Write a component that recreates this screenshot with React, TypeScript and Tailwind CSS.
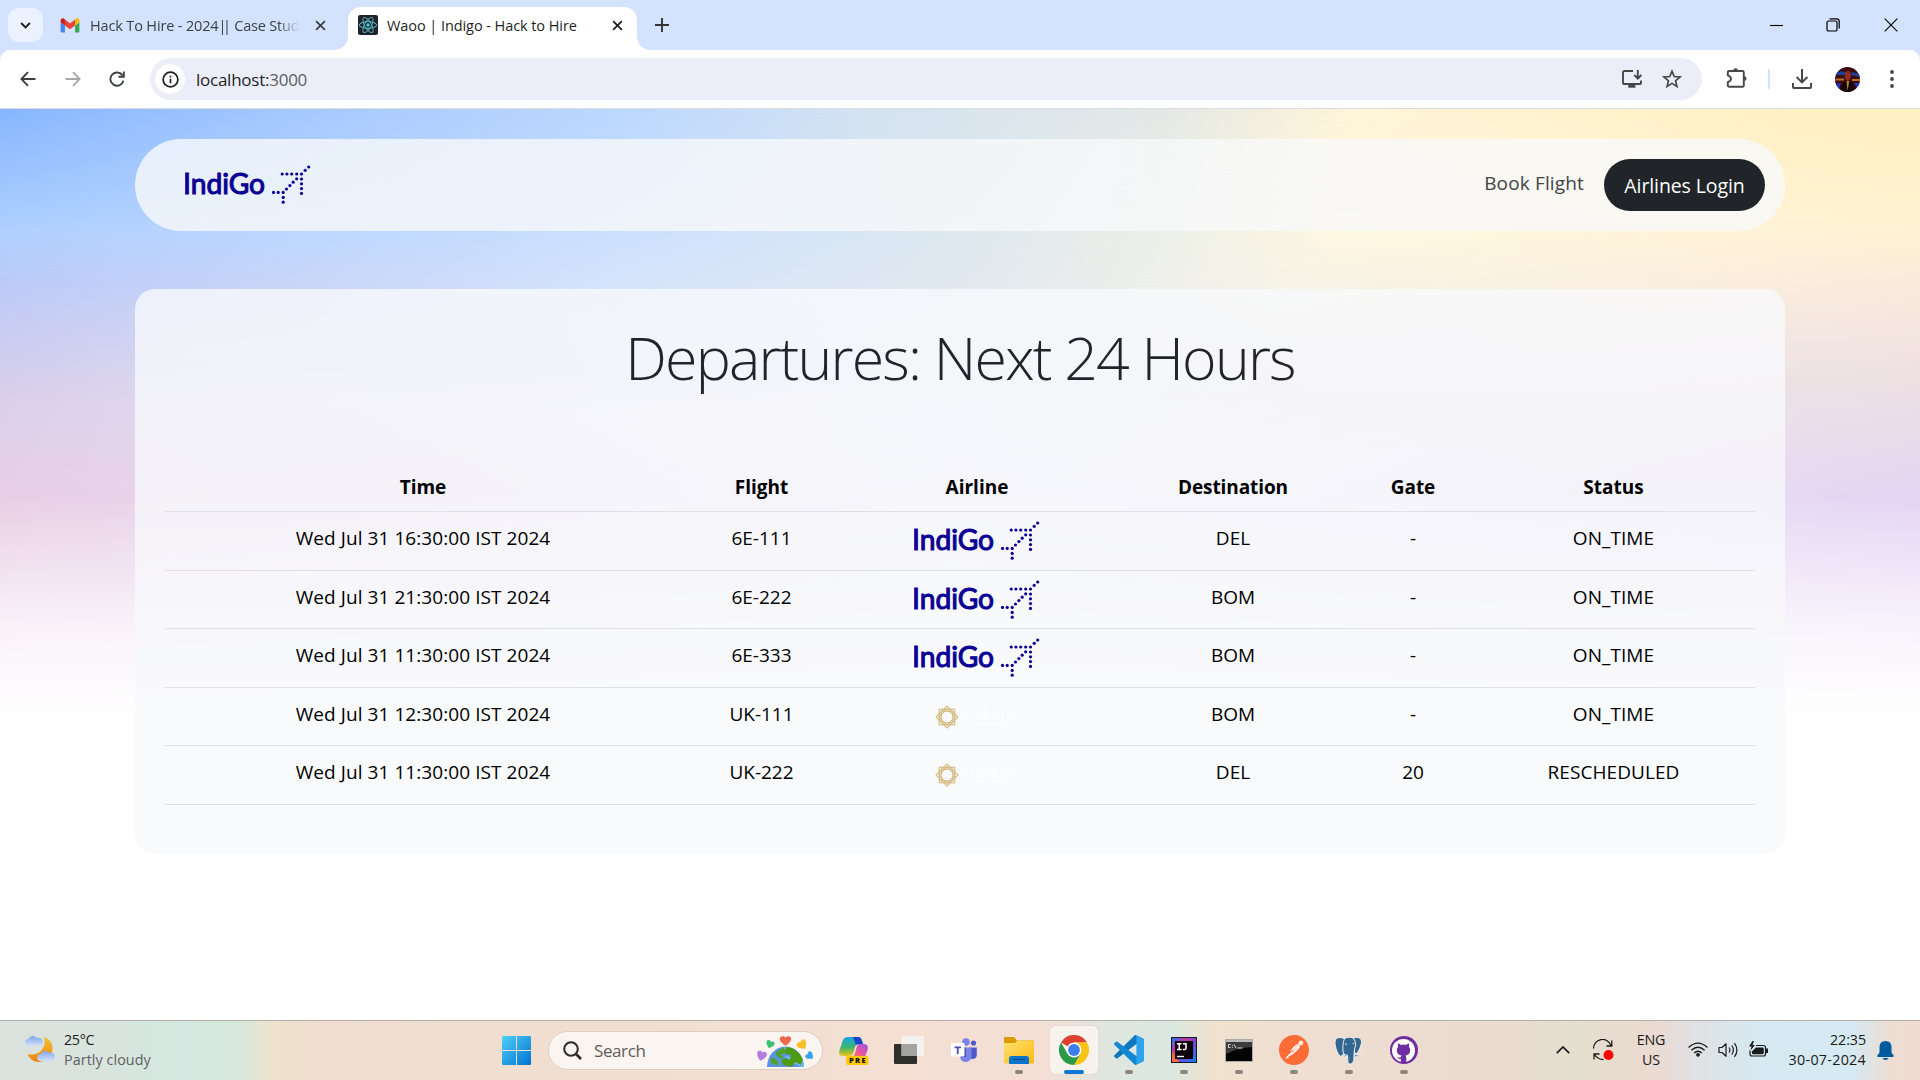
import React from 'react';
import { SiPostman, SiReact } from 'react-icons/si';

const UI = "font-['Open_Sans','Noto_Sans',sans-serif]";

function CloseIcon({ className }: { className: string }) {
  return (
    <svg viewBox="0 0 12 12" className={className} fill="none" stroke="currentColor" strokeWidth="1.9">
      <path d="M1.2 1.2 10.8 10.8M10.8 1.2 1.2 10.8" />
    </svg>
  );
}

function GmailIcon() {
  return (
    <svg viewBox="0 0 20 16" className="h-[15px] w-5 shrink-0">
      <path d="M1.4 15.5H4.6V8L0 4.5V14.1C0 14.9.6 15.5 1.4 15.5Z" fill="#4285f4" />
      <path d="M15.4 15.5H18.6C19.4 15.5 20 14.9 20 14.1V4.5L15.4 8Z" fill="#34a853" />
      <path d="M15.4 1.7V8L20 4.5V2.7C20 .9 18 -.4 16.3 .9Z" fill="#fbbc04" />
      <path d="M4.6 8V1.7L10 5.8 15.4 1.7V8L10 12Z" fill="#ea4335" />
      <path d="M0 2.7V4.5L4.6 8V1.7L3.7.9C2-.4 0 .9 0 2.7Z" fill="#c5221f" />
    </svg>
  );
}

function TabStrip() {
  return (
    <div className="flex h-[50px] shrink-0 items-start bg-[#d3e2fd] text-[#1f1f1f]">
      <div className="ml-2 mt-2 flex h-[34px] w-[35px] items-center justify-center rounded-[11px] bg-[#ebf1fe]">
        <svg viewBox="0 0 12 8" className="h-[7px] w-[11px]" fill="none" stroke="#1f1f1f" strokeWidth="2.2">
          <path d="M1 1.2 6 6.2 11 1.2" />
        </svg>
      </div>
      <div className="ml-[17px] flex h-[50px] w-[272px] items-center">
        <GmailIcon />
        <div className="ml-[10px] w-[209px] overflow-hidden whitespace-nowrap pt-px text-[14.5px] tracking-[-0.15px] text-[#3c4043] [mask-image:linear-gradient(to_right,black_90%,transparent)]">
          Hack To Hire - 2024<span className="tracking-[-3.4px]">||</span>
          <span className="ml-[3px] tracking-[-0.2px]"> Case Study</span>
        </div>
        <CloseIcon className="ml-4 h-[11px] w-[11px] shrink-0 text-[#3c4043]" />
      </div>
      <div className="relative ml-4 mt-[7px] flex h-[43px] w-[289px] items-center rounded-t-[13px] bg-white pb-[7px] pl-[10px]">
        <div className="absolute -left-[13px] bottom-0 h-[13px] w-[13px] bg-[radial-gradient(circle_at_0_0,transparent_12.5px,white_13px)]" />
        <div className="absolute -right-[13px] bottom-0 h-[13px] w-[13px] bg-[radial-gradient(circle_at_100%_0,transparent_12.5px,white_13px)]" />
        <div className="flex h-5 w-5 items-center justify-center rounded-[2px] bg-[#222326]">
          <SiReact className="h-[18px] w-[18px] text-[#58c4dc]" />
        </div>
        <div className="ml-[9px] w-[225px] whitespace-nowrap pt-px text-[14.5px] tracking-[-0.07px]">Waoo | Indigo - Hack to Hire</div>
        <CloseIcon className="h-[11px] w-[11px] shrink-0" />
      </div>
      <svg viewBox="0 0 14 14" className="ml-[18px] mt-[18px] h-[14px] w-[14px]" fill="none" stroke="#333" strokeWidth="1.9">
        <path d="M7 0V14M0 7H14" />
      </svg>
      <div className="ml-auto mr-[22px] mt-[18px] flex items-center">
        <svg viewBox="0 0 13 13" className="h-[13px] w-[13px]" stroke="#000" strokeWidth="1.1">
          <path d="M0 6.5H13" />
        </svg>
        <svg viewBox="0 0 14 14" className="ml-[43px] h-[14px] w-[14px]" fill="none" stroke="#000" strokeWidth="1.2">
          <rect x="1" y="3" width="10" height="10" rx="1.6" />
          <path d="M3.6 .8H10.6Q13.2.8 13.2 3.4V10.4" />
        </svg>
        <svg viewBox="0 0 14 14" className="ml-[44px] h-[14px] w-[14px]" fill="none" stroke="#000" strokeWidth="1.1">
          <path d="M.7.7 13.3 13.3M13.3.7.7 13.3" />
        </svg>
      </div>
    </div>
  );
}

function Toolbar() {
  return (
    <div className="h-[59px] shrink-0 bg-[#d3e2fd]">
      <div className="flex h-[59px] items-center rounded-t-[10px] border-b border-[#dadde3] bg-white pl-5 text-[#474747]">
        <svg viewBox="0 0 16 16" className="h-4 w-4" fill="none" stroke="#3c4043" strokeWidth="1.9">
          <path d="M15.5 8H1.5M8 1.2 1.4 8 8 14.8" />
        </svg>
        <svg viewBox="0 0 16 16" className="ml-[29px] h-4 w-4" fill="none" stroke="#a6a8ab" strokeWidth="1.9">
          <path d="M.5 8H14.5M8 1.2 14.6 8 8 14.8" />
        </svg>
        <svg viewBox="0 0 16 16" className="ml-[28px] h-4 w-4" fill="none" stroke="#3c4043" strokeWidth="1.9">
          <path d="M13.6 4.6A6.6 6.6 0 1 0 14.4 9.6" />
          <path d="M14.8.4V5.8H9.4" />
        </svg>
        <div className="ml-[25px] flex h-[42px] w-[1552px] items-center rounded-full bg-[#ebeef8] pl-[5px]">
          <div className="flex h-[30px] w-[30px] items-center justify-center rounded-full bg-white">
            <svg viewBox="0 0 18 18" className="h-[17px] w-[17px]" fill="none" stroke="#1f1f1f" strokeWidth="1.8">
              <circle cx="9" cy="9" r="7.8" />
              <path d="M9 8.2V13M9 5V6.8" />
            </svg>
          </div>
          <div className="ml-[11px] pt-px text-[17px] tracking-[-0.25px] text-[#1f1f1f]">
            localhost:<span className="text-[#5b5e63]">3000</span>
          </div>
          <svg viewBox="0 0 20 18" className="ml-auto h-[18px] w-5" fill="none" stroke="#474747" strokeWidth="1.9">
            <path d="M11 1H2.6Q1 1 1 2.6V12.4Q1 14 2.6 14H17.4Q19 14 19 12.4V10.4" />
            <path d="M15.8 0V8M12.3 5 15.8 8.6 19.3 5" />
            <path d="M6.3 16.2H13.4" strokeWidth="3" />
          </svg>
          <svg viewBox="0 0 20 20" className="ml-5 mr-5 h-[20px] w-[20px]" fill="none" stroke="#474747" strokeWidth="1.7">
            <path d="M10 2.2 12.2 7.5 18 8 13.6 11.7 14.9 17.4 10 14.4 5.1 17.4 6.4 11.7 2 8 7.8 7.5Z" />
          </svg>
        </div>
        <svg viewBox="0 0 22 22" className="-mt-[3px] ml-[24px] h-[22px] w-[22px]" fill="none" stroke="#474747" strokeWidth="1.9">
          <path d="M2.8 4H16.4Q17.8 4 17.8 5.4V18.4Q17.8 19.8 16.4 19.8H3.2Q1.8 19.8 1.8 18.4V15.2Q5 14 5 11.8 5 9.6 1.8 8.4V5Q1.8 4 2.8 4Z" />
          <path d="M7.2 3.6A2.4 2.4 0 0 1 12 3.6ZM18.2 9.2A2.4 2.4 0 0 1 18.2 14Z" fill="#474747" stroke="none" />
        </svg>
        <div className="ml-[20px] h-5 w-[2px] bg-[#d3e2fd]" />
        <svg viewBox="0 0 22 22" className="ml-[21px] h-[22px] w-[22px]" fill="none" stroke="#474747" strokeWidth="2">
          <path d="M11 1V14M5.6 9 11 14.4 16.4 9" />
          <path d="M2 15V18.4Q2 20 3.6 20H18.4Q20 20 20 18.4V15" />
        </svg>
        <svg viewBox="0 0 25 25" className="ml-[22px] h-[25px] w-[25px] rounded-full">
          <rect width="25" height="25" fill="#3a0a10" />
          <path d="M0 6Q6 3 10 5V8H0ZM17 5 25 7V10L16 8Z" fill="#1d3f9c" />
          <path d="M1 11.500H9V13.500H0ZM17 12H25V14H17Z" fill="#b8722b" />
          <path d="M0 17 6 16 4 22ZM19 16 25 16 22 21Z" fill="#2038c8" />
          <path d="M9.5 8Q10 4 13 4 16 4 16 8 16 13 12.5 14 9.5 12 9.5 8Z" fill="#8f2d1c" />
          <path d="M5 25Q5 15 12.5 14 20 15 20 25Z" fill="#180507" />
          <path d="M11.500 14 12.5 24 14.2 14Z" fill="#b98c2c" />
        </svg>
        <svg viewBox="0 0 4 20" className="ml-[30px] h-5 w-1" fill="#474747">
          <circle cx="2" cy="3" r="1.9" />
          <circle cx="2" cy="10" r="1.9" />
          <circle cx="2" cy="17" r="1.9" />
        </svg>
      </div>
    </div>
  );
}

const PLANE_DOTS: [number, number][] = [
  [124.5, 2], [121, 5.3], [117.3, 9], [112.5, 9], [107.5, 9], [102.7, 9], [98, 9],
  [117.3, 14], [117.3, 18.8], [117.3, 23.6], [117.3, 28.4], [112.5, 13.8], [109, 17.2],
  [105.7, 20.6], [102.3, 24], [99, 27.4], [94, 27.4], [89.3, 27.4], [99, 32.4], [99, 37.2],
];

function IndigoLogo() {
  return (
    <svg viewBox="0 0 127 40" className="h-10 w-[127px]" fill="#0a0094">
      <text
        x="-2"
        y="28.8"
        textLength="82"
        lengthAdjust="spacingAndGlyphs"
        stroke="#0a0094"
        strokeWidth="1.1"
        className="font-[Lato,sans-serif] text-[29px] font-normal"
      >
        IndiGo
      </text>
      {PLANE_DOTS.map(([x, y]) => (
        <circle key={`${x}-${y}`} cx={x - 0.8} cy={y} r="1.6" />
      ))}
    </svg>
  );
}

function VistaraLogo() {
  return (
    <div className="flex h-10 w-[127px] items-center pl-[21px]">
      <svg viewBox="-12 -12 24 24" className="h-6 w-6" fill="none" stroke="#d0b575" strokeWidth="1">
        <rect x="-7.8" y="-7.8" width="15.6" height="15.6" />
        <rect x="-7.8" y="-7.8" width="15.6" height="15.6" transform="rotate(45)" />
        <rect x="-5.8" y="-5.8" width="11.6" height="11.6" />
        <rect x="-5.8" y="-5.8" width="11.6" height="11.6" transform="rotate(45)" />
      </svg>
      <div className="ml-[3px] flex flex-col text-white">
        <span className="text-[15px] leading-[12px] tracking-[1.300px]">vistara</span>
        <span className="text-[5px] leading-[8px]">Fly the new feeling</span>
      </div>
    </div>
  );
}

function Backdrop() {
  return (
    <div className="absolute inset-x-0 top-0 h-[620px]">
      <div className="absolute inset-0 bg-[linear-gradient(to_right,#e9cfe6_0,#e9d5ec_200px,#eeeaf8_50%,#e7daf4_1750px,#e5d5f4_100%)] [mask-image:linear-gradient(to_bottom,black_390px,rgba(0,0,0,.72)_440px,rgba(0,0,0,.22)_530px,transparent_615px)]" />
      <div className="absolute inset-0 bg-[linear-gradient(to_right,#dacfea_0,#e2dcf0_250px,#ebeaf6_50%,#ecdee4_100%)] [mask-image:linear-gradient(to_bottom,black_290px,transparent_390px)]" />
      <div className="absolute inset-0 bg-[linear-gradient(to_right,#bdcaf7_0,#cad6f8_300px,#d5e4fc_600px,#e2e9f0_960px,#f7f4e8_1280px,#fbf1e3_1500px,#f8eadb_100%)] [mask-image:linear-gradient(to_bottom,black_178px,transparent_290px)]" />
      <div className="absolute inset-0 bg-[linear-gradient(to_right,#aed0ff_0,#bfd9ff_400px,#cfe2fd_700px,#dce8ee_960px,#edf0e6_1180px,#fff7e0_1340px,#fff3d2_100%)] [mask-image:linear-gradient(to_bottom,black_115px,transparent_180px)]" />
      <div className="absolute inset-0 bg-[linear-gradient(to_right,#86b5ff_0,#a5c8ff_300px,#bdd8fd_640px,#d3e2f1_860px,#e3e8e6_1160px,#fff4d8_1350px,#fff0c2_1800px,#fff0c2_100%)] [mask-image:linear-gradient(to_bottom,black_0,transparent_120px)]" />
    </div>
  );
}

function NavBar() {
  return (
    <div className="mx-[135px] mt-[30px] flex h-[92px] shrink-0 items-center rounded-[46px] bg-[#f8f9fa]/80 pl-[50px] pr-5">
      <IndigoLogo />
      <div className="-mt-[4px] ml-auto mr-5 text-[19px] tracking-[0.15px] text-[#404347]">Book Flight</div>
      <div className="flex h-[52px] w-[161px] items-center justify-center whitespace-nowrap rounded-full bg-[#212529] pt-[2px] text-[19.5px] tracking-[-0.1px] text-white">
        Airlines Login
      </div>
    </div>
  );
}

const FLIGHTS = [
  { time: 'Wed Jul 31 16:30:00 IST 2024', flight: '6E-111', airline: 'indigo', dest: 'DEL', gate: '-', status: 'ON_TIME' },
  { time: 'Wed Jul 31 21:30:00 IST 2024', flight: '6E-222', airline: 'indigo', dest: 'BOM', gate: '-', status: 'ON_TIME' },
  { time: 'Wed Jul 31 11:30:00 IST 2024', flight: '6E-333', airline: 'indigo', dest: 'BOM', gate: '-', status: 'ON_TIME' },
  { time: 'Wed Jul 31 12:30:00 IST 2024', flight: 'UK-111', airline: 'vistara', dest: 'BOM', gate: '-', status: 'ON_TIME' },
  { time: 'Wed Jul 31 11:30:00 IST 2024', flight: 'UK-222', airline: 'vistara', dest: 'DEL', gate: '20', status: 'RESCHEDULED' },
];

const ROW = 'grid grid-cols-[516px_161px_270px_242px_118px_283px] border-b border-[#dee2e6] text-center text-[19px] text-black';

function Departures() {
  return (
    <div className="mx-[135px] mt-[58px] h-[565px] shrink-0 rounded-[20px] bg-[#f8f9fb]/80 px-[30px]">
      <h1 className="mt-[28px] text-center text-[59px] font-light leading-[80px] tracking-[-1.8px] text-[#212529]">
        Departures: Next 24 Hours
      </h1>
      <div className={`${ROW} mt-[65px] h-[50px] pt-[11px] font-bold leading-[28px]`}>
        <div>Time</div>
        <div>Flight</div>
        <div>Airline</div>
        <div className="tracking-[-0.1px]">Destination</div>
        <div>Gate</div>
        <div>Status</div>
      </div>
      {FLIGHTS.map((f, i) => (
        <div key={i} className={`${ROW} h-[58.5px] leading-[52px]`}>
          <div className="tracking-[0.07px]">{f.time}</div>
          <div>{f.flight}</div>
          <div className="flex justify-center pt-[9px]">{f.airline === 'indigo' ? <IndigoLogo /> : <VistaraLogo />}</div>
          <div>{f.dest}</div>
          <div>{f.gate}</div>
          <div className="tracking-[0.07px]">{f.status}</div>
        </div>
      ))}
    </div>
  );
}

function WeatherIcon() {
  return (
    <svg viewBox="0 0 30 30" className="h-[30px] w-[30px]">
      <defs>
        <linearGradient id="moon" x1="0" y1="0" x2="0" y2="1">
          <stop offset="0" stopColor="#f2c335" />
          <stop offset="1" stopColor="#f1820f" />
        </linearGradient>
        <linearGradient id="cloud" x1="0" y1="0" x2="0" y2="1">
          <stop offset="0" stopColor="#7ea6ee" />
          <stop offset="1" stopColor="#d5e1fb" />
        </linearGradient>
      </defs>
      <path d="M19 3C26 5 30 13 26 20 21 30 7 31 2.500 20 14 23 22 14 19 3Z" fill="url(#moon)" />
      <path d="M3.500 12A3.500 3.500 0 0 1 3.500 5 5 5 0 0 1 12 4 4 4 0 0 1 15 12Z" fill="url(#cloud)" />
      <path d="M15.500 27A3.500 3.500 0 0 1 16 20 5 5 0 0 1 24.500 19 4 4 0 0 1 27 27Z" fill="url(#cloud)" />
    </svg>
  );
}

function SearchArt() {
  const heart = 'M0 4.500C-6-1-4-5-1.500-4.500-.5-4.300 0-3.500 0-3 0-3.500.5-4.300 1.500-4.500 4-5 6-1 0 4.500Z';
  return (
    <svg viewBox="0 0 58 33" className="h-[33px] w-[58px]">
      <defs>
        <clipPath id="globe"><path d="M10 32A18 20 0 0 1 47 32Z" /></clipPath>
      </defs>
      <g clipPath="url(#globe)">
        <rect width="58" height="33" fill="#5d93e6" />
        <path d="M26 12 40 14 48 24 47 33H44L40 29 32 28 27 24 29 21 36 22 32 17 25 17Z" fill="#6fb8f5" />
        <path d="M29 12Q40 12 46 24L44 30 38 27 35 32 26 30 24 25 29 23 33 25 34 20 28 19Z" fill="#4c9a12" />
        <path d="M19 17 27 12 29 17 24 20 27 22 23 24 19 20ZM14 22 20 25 22 31 14 28Z" fill="#52a12b" />
      </g>
      <path d={heart} fill="#f0664a" transform="translate(28.500 6) scale(1.450 1.050)" />
      <path d={heart} fill="#3fc06d" transform="translate(13 9.500) rotate(20) scale(1.050 .85)" />
      <path d={heart} fill="#f9c02c" transform="translate(45.500 10) rotate(-35) scale(1.300 1)" />
      <path d={heart} fill="#b57de0" transform="translate(4.500 21) rotate(15) scale(1.250 1.100)" />
      <path d={heart} fill="#3ba2ee" transform="translate(53 21) rotate(-50) scale(1 .85)" />
    </svg>
  );
}

function StartIcon() {
  return (
    <svg viewBox="0 0 29 29" className="h-[29px] w-[29px]">
      <defs>
        <linearGradient id="win" x1="0" y1="0" x2="1" y2="1">
          <stop offset="0" stopColor="#4fd0fb" />
          <stop offset="1" stopColor="#0072d0" />
        </linearGradient>
      </defs>
      <path d="M1 0H14V14H0V1Q0 0 1 0ZM15 0H28Q29 0 29 1V14H15ZM0 15H14V29H1Q0 29 0 28ZM15 15H29V28Q29 29 28 29H15Z" fill="url(#win)" />
    </svg>
  );
}

function CopilotIcon() {
  return (
    <svg viewBox="0 0 30 29" className="h-[29px] w-[30px]">
      <defs>
        <linearGradient id="cpA" x1="0" y1="0" x2="0" y2="1">
          <stop offset="0" stopColor="#17a3e8" />
          <stop offset=".55" stopColor="#3fb56a" />
          <stop offset="1" stopColor="#f0c419" />
        </linearGradient>
        <linearGradient id="cpB" x1="1" y1="0" x2="0" y2="1">
          <stop offset="0" stopColor="#8d58e8" />
          <stop offset=".5" stopColor="#e553a6" />
          <stop offset="1" stopColor="#f9853f" />
        </linearGradient>
      </defs>
      <path d="M9 1H19Q22 1 23 5L24 8H20Q17 8 16 11L14 18Q13 20 10 20H4Q-1 20 .5 14L4 4Q5.500 1 9 1Z" fill="url(#cpA)" />
      <path d="M14 1H19Q22 1 23 5L24 8H20Q18 8 17 9Z" fill="#1446c4" />
      <path d="M20 8H25Q30 8 28.500 14L26 21H12Q15 21 16 17L18 10Q18.500 8 20 8Z" fill="url(#cpB)" />
      <rect x="7" y="20" width="22.500" height="9" rx="2" fill="#fdc70c" />
      <text x="10" y="27.300" textLength="16.500" className="font-['Open_Sans',sans-serif] text-[7.500px] font-extrabold" fill="#111">PRE</text>
    </svg>
  );
}

function TaskViewIcon() {
  return (
    <svg viewBox="0 0 30 28" className="h-7 w-[30px]">
      <rect x="0" y="8" width="23" height="20" rx="1" fill="#2e2e2c" />
      <rect x="7.500" y="0" width="22.500" height="20" rx="1" fill="#f4f4f4" fillOpacity=".85" />
      <path d="M7.500 8H23V20H7.500Z" fill="#a3a3a1" />
    </svg>
  );
}

function TeamsIcon() {
  return (
    <svg viewBox="0 0 26 25" className="h-[25px] w-[26px]">
      <circle cx="15" cy="4" r="3.800" fill="#7b83eb" />
      <circle cx="22.500" cy="5" r="2.600" fill="#5059c9" />
      <path d="M18 9.500H25.800V17Q25.500 21 21.500 21 18 21 18 17Z" fill="#5059c9" />
      <path d="M9 9.500H20.500V17Q20.500 24 14.500 24 9 24 9 17Z" fill="#7b83eb" />
      <path d="M10 9.500H15V19H10Z" fill="#4a53b5" />
      <rect x="0" y="5" width="13.500" height="13.500" rx="1" fill="#fff" />
      <path d="M3.500 8.500H10V10.300H7.700V16H5.800V10.300H3.500Z" fill="#4b53bc" />
    </svg>
  );
}

function FolderIcon() {
  return (
    <svg viewBox="0 0 30 27" className="h-[27px] w-[30px]">
      <defs>
        <linearGradient id="fold" x1="0" y1="0" x2="1" y2="1">
          <stop offset="0" stopColor="#ffe173" />
          <stop offset="1" stopColor="#fcb910" />
        </linearGradient>
      </defs>
      <path d="M0 1Q0 0 1 0H9.500Q10.500 0 11 1L13 3.500H29Q30 3.500 30 4.500V10H0Z" fill="#d99a05" />
      <path d="M0 6H11L13 3.500H29Q30 3.500 30 4.500V25.500Q30 26.500 29 26.500H1Q0 26.500 0 25.500Z" fill="url(#fold)" />
      <path d="M5 27V21.500Q5 19 7.500 19H22.500Q25 19 25 21.500V27Z" fill="#0c74cc" />
      <path d="M9 22.500H21" stroke="#0a4a80" strokeWidth="1" />
    </svg>
  );
}

function ChromeIcon() {
  return (
    <svg viewBox="-15 -15 30 30" className="h-[30px] w-[30px]">
      <path d="M0 0-13-7.500A15 15 0 0 1 13-7.500L0-7.500Z" fill="#dd4132" />
      <path d="M0 0V-7.500H13A15 15 0 0 1 0 15L6.500 3.750Z" fill="#fbc314" />
      <path d="M0 0 6.500 3.750 0 15A15 15 0 0 1-13-7.500L-6.500 3.750Z" fill="#2a9a49" />
      <circle r="7.400" fill="#fff" />
      <circle r="5.900" fill="#3b7ded" />
    </svg>
  );
}

function VsCodeIcon() {
  return (
    <svg viewBox="0 0 30 30" className="h-[30px] w-[30px]">
      <path d="M21.500 0 29 3.400Q30 4 30 5V9L22.400 9 3.500 23.200Q2.700 23.800 2 23.200L.4 21.700Q-.3 21 .4 20.200L20 1Q20.700.1 21.500 0Z" fill="#0f77bd" />
      <path d="M21.500 30 29 26.600Q30 26 30 25V21L22.400 21 3.500 6.800Q2.700 6.200 2 6.800L.4 8.300Q-.3 9 .4 9.800L20 29Q20.700 29.900 21.500 30Z" fill="#1388d2" />
      <path d="M21.500 30Q22.400 29.500 22.400 28V2Q22.400.5 21.500 0L29 3.400Q30 4 30 5V25Q30 26 29 26.600Z" fill="#2ea4ee" />
    </svg>
  );
}

function IntellijIcon() {
  return (
    <svg viewBox="0 0 26 26" className="h-[26px] w-[26px]">
      <defs>
        <linearGradient id="ij" x1="0" y1="0" x2="1" y2="1">
          <stop offset="0" stopColor="#1a7af8" />
          <stop offset=".3" stopColor="#c5339b" />
          <stop offset=".55" stopColor="#7a46c8" />
          <stop offset="1" stopColor="#0b83f8" />
        </linearGradient>
      </defs>
      <rect width="26" height="26" fill="#15152a" />
      <rect x="1" y="1" width="24" height="24" fill="url(#ij)" />
      <path d="M1 14 8 25H1Z" fill="#f76a3c" />
      <rect x="4" y="4" width="18" height="18" fill="#0a0007" />
      <path d="M6 6.700H10.500M8.200 6.700V12.500M6 12.600H10.500M12 6.700H15V11Q15 12.600 13.400 12.600H11.800" stroke="#fff" strokeWidth="1.500" fill="none" />
      <path d="M6 19.500H13" stroke="#fff" strokeWidth="1.400" />
    </svg>
  );
}

function TerminalIcon() {
  return (
    <svg viewBox="0 0 28 23" className="h-[23px] w-7">
      <rect x=".5" y=".5" width="27" height="22" fill="#050505" stroke="#a9a9a9" />
      <path d="M1 1H27V3H1Z" fill="#b8bcc0" />
      <path d="M1 3H27V8Q12 9 1 15Z" fill="#3c3c3c" />
      <path d="M3.500 5.500H5.500M3.500 8.500H5.500M3.500 5.500V8.500M7.500 6V6.800M7.500 8V8.800M9 5.500 11 9M12.500 9H17.500" stroke="#e8e8e8" strokeWidth=".9" />
    </svg>
  );
}

function PostmanIcon() {
  return (
    <div className="rounded-full bg-[radial-gradient(circle,white_60%,transparent_61%)]">
      <SiPostman className="h-[30px] w-[30px] text-[#ff6c37]" />
    </div>
  );
}

function PostgresIcon() {
  return (
    <svg viewBox="0 0 29 29" className="h-[29px] w-[29px]" fill="#336791" stroke="#f3efee" strokeWidth="1" strokeLinejoin="round">
      <path d="M10 2.500C5 .3 1 1.800 1 6.500 1 11 3.500 18 6 20 8 21 9.500 17.500 10.500 16.500L12 4Z" />
      <path d="M19 2.500C24-.3 28 2.500 27.500 6.500 27 11 24.500 15.500 22.500 18L18.500 14 17 4Z" />
      <path d="M9.500 5.500Q10.500 1 15 1.200 19.500.8 21 5 22.500 9.500 20.500 13 20 17.500 20 20.500 20.200 27.500 16.500 28 13.500 28.200 13.800 24 14 21 13.200 19 9.200 19.500 9 15 8.500 9.500 9.500 5.500Z" />
      <path d="M20.500 18.500Q23.500 19.800 26.500 18.500 24.500 21.300 20.300 21ZM13.300 19.500Q11 21.500 7.500 20.700 10.500 20 11.500 18.800" />
      <path d="M11 8.200Q12 7.600 13 8.300M18.500 7.800Q19.300 7.300 20.200 7.800" fill="none" />
    </svg>
  );
}

function GithubIcon() {
  return (
    <div className="flex h-7 w-7 items-center justify-center rounded-full bg-[#6f2da0]">
      <div className="h-[23px] w-[23px] overflow-hidden rounded-full bg-white">
        <svg viewBox="0 0 23 23" className="h-[23px] w-[23px]">
          <path d="M8.800 23V19.800Q5.500 20.300 4.300 17.800 6.300 19.300 8.800 18.200 9 17 9.600 16.500C6.300 16 4.800 14.200 4.800 11.200 4.800 9.800 5.200 8.700 6 7.900Q5.500 6.300 6.200 4.600 7.800 4.700 9.200 5.900 11.500 5.300 13.800 5.900 15.200 4.700 16.800 4.600 17.500 6.300 17 7.900C17.800 8.700 18.200 9.800 18.200 11.200 18.200 14.200 16.700 16 13.400 16.500Q14.300 17.300 14.300 19V23Z" fill="#6f2da0" />
        </svg>
      </div>
    </div>
  );
}

const PINNED: { icon: React.ReactNode; state: 'none' | 'open' | 'active' }[] = [
  { icon: <CopilotIcon />, state: 'none' },
  { icon: <TaskViewIcon />, state: 'none' },
  { icon: <TeamsIcon />, state: 'none' },
  { icon: <FolderIcon />, state: 'open' },
  { icon: <ChromeIcon />, state: 'active' },
  { icon: <VsCodeIcon />, state: 'open' },
  { icon: <IntellijIcon />, state: 'open' },
  { icon: <TerminalIcon />, state: 'open' },
  { icon: <PostmanIcon />, state: 'open' },
  { icon: <PostgresIcon />, state: 'open' },
  { icon: <GithubIcon />, state: 'open' },
];

function Taskbar() {
  return (
    <div className="flex h-[60px] shrink-0 items-center border-t border-[#b5b0ab] bg-[linear-gradient(to_right,#dce2dd_0,#d9e4de_100px,#d3e8e0_180px,#d9e8dc_240px,#eee2cb_275px,#f0ddcf_310px,#f0dfd1_650px,#f5dfd3_900px,#f3dfd5_1050px,#dee6df_1110px,#dae8e1_1170px,#f0e2cd_1215px,#eedfd2_1300px,#ebdad0_1500px,#e4dfcf_1570px,#ebdad0_1650px,#dfe2e5_1700px,#d6e9f2_1760px,#d5eaf4_1850px,#ecddd3_1890px,#f0dccf_1920px)]">
      <div className="ml-[25px] flex w-[477px] items-center">
        <div className="-mt-1"><WeatherIcon /></div>
        <div className="-mt-[2px] ml-[9px] text-[14.300px] leading-5">
          <div className="tracking-[-0.3px] text-[#1b1b1b]">25°C</div>
          <div className="tracking-[0.08px] text-[#5c605e]">Partly cloudy</div>
        </div>
      </div>
      <StartIcon />
      <div className="ml-[17px] flex h-[39px] w-[275px] items-center rounded-full border border-[#dccdc2] bg-[#fbf5f1] pl-[14px]">
        <svg viewBox="0 0 19 19" className="h-[19px] w-[19px]" fill="none" stroke="#2b2b2b" strokeWidth="2">
          <circle cx="8" cy="8" r="6.800" />
          <path d="M13 13 18 18" strokeWidth="2.600" />
        </svg>
        <div className="ml-[12px] text-[17px] tracking-[-0.4px] text-[#5f5c5a]">Search</div>
        <div className="ml-auto mr-[7px] mt-[2px]"><SearchArt /></div>
      </div>
      <div className="-mt-px ml-[3px] flex">
        {PINNED.map((p, i) => (
          <div
            key={i}
            className={`relative mx-[3.500px] flex h-12 w-12 items-center justify-center rounded-[5px] ${
              p.state === 'active' ? 'bg-[#f9f3ee] shadow-[0_0_1px_rgba(0,0,0,.25)]' : ''
            }`}
          >
            {p.icon}
            {p.state === 'open' && <div className="absolute bottom-0 h-1 w-2 rounded-full bg-[#8b857f]" />}
            {p.state === 'active' && <div className="absolute bottom-0 h-1 w-5 rounded-full bg-[#0b78d4]" />}
          </div>
        ))}
      </div>
      <div className="-mt-[2px] ml-auto mr-[26px] flex items-center text-[#1b1b1b]">
        <svg viewBox="0 0 14 8" className="h-2 w-[14px]" fill="none" stroke="#1b1b1b" strokeWidth="1.700">
          <path d="M.8 7.200 7 1 13.200 7.200" />
        </svg>
        <svg viewBox="0 0 22 22" className="ml-[22px] h-[22px] w-[22px]" fill="none" stroke="#1b1b1b" strokeWidth="1.300">
          <path d="M1.500 9.500A9 9 0 0 1 19 6.500M19.800 1.500V7H14.500" />
          <path d="M2 20.500V15H7.500M2.500 15.500Q5.500 20.500 11.500 20.500" />
          <circle cx="16.500" cy="16" r="5" fill="#f00" stroke="none" />
        </svg>
        <div className="ml-[22px] w-[30px] text-center text-[14.300px] leading-5 tracking-[-0.2px]">
          <div>ENG</div>
          <div>US</div>
        </div>
        <svg viewBox="0 0 20 15" className="ml-[22px] h-[15px] w-5" fill="none" stroke="#1b1b1b" strokeWidth="1.300">
          <path d="M.6 5.500Q10-3.300 19.400 5.500M3.400 8.300Q10 2.200 16.600 8.300M6.200 11Q10 7.500 13.800 11" />
          <circle cx="10" cy="12.800" r="1.900" fill="#1b1b1b" stroke="none" />
        </svg>
        <svg viewBox="0 0 20 16" className="ml-[10px] h-4 w-5" fill="none" stroke="#1b1b1b" strokeWidth="1.200">
          <path d="M1 5.500H4L8 1.800V14.200L4 10.500H1Z" strokeLinejoin="round" />
          <path d="M11 5.500Q12.800 8 11 10.500M13.800 3.500Q17 8 13.800 12.500M16.400 1.200Q21.500 8 16.400 14.800" />
        </svg>
        <svg viewBox="0 0 20 17" className="ml-[10px] h-[17px] w-5" fill="none" stroke="#1b1b1b" strokeWidth="1.200">
          <path d="M8 4.500H15.500Q17.500 4.500 17.500 6.500V13Q17.500 15 15.500 15H4Q2 15 2 13V9.500" />
          <path d="M8 6.500H14.500Q15.800 6.500 15.800 7.800V11.800Q15.800 13.200 14.500 13.200H5Q3.800 13.200 3.800 11.800V10.500Z" fill="#1b1b1b" stroke="none" />
          <path d="M18 8H19.500V11.500H18Z" fill="#1b1b1b" />
          <path d="M4.500 0 1 5.500H3.500L2.500 9.500 7 4H4.500L6 0Z" fill="#1b1b1b" stroke="none" />
        </svg>
        <div className="ml-[19px] w-[79px] text-right text-[14.300px] leading-5">
          <div className="tracking-[-0.1px]">22:35</div>
          <div className="whitespace-nowrap tracking-[0.28px]">30-07-2024</div>
        </div>
        <svg viewBox="0 0 17 19" className="ml-[11px] mt-px h-[19px] w-[17px]" fill="#005a9e">
          <path d="M8.500 0Q14.500 0 14.500 6V11.500L16.700 14.500Q17 16 15.500 16H1.500Q0 16 .3 14.500L2.500 11.500V6Q2.500 0 8.500 0ZM5.500 17H11.500Q10.800 19 8.500 19 6.200 19 5.500 17Z" />
        </svg>
      </div>
    </div>
  );
}

export default function App() {
  return (
    <div className={`flex h-[1080px] w-[1920px] flex-col overflow-hidden bg-white ${UI}`}>
      <TabStrip />
      <Toolbar />
      <div className="relative h-[911px] shrink-0">
        <Backdrop />
        <div className="relative flex flex-col">
          <NavBar />
          <Departures />
        </div>
      </div>
      <Taskbar />
    </div>
  );
}
